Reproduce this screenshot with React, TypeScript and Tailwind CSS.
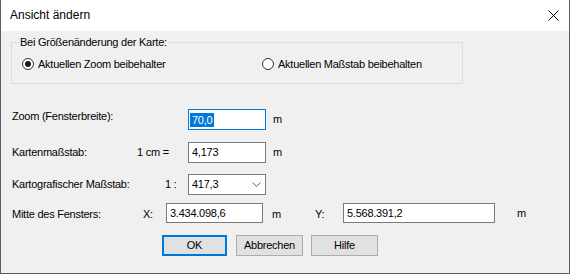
const Radio = ({ checked }: { checked?: boolean }) => (
  <span className="w-[12px] h-[12px] rounded-full border border-[#333] bg-white flex items-center justify-center shrink-0">
    {checked && <span className="w-[6px] h-[6px] rounded-full bg-[#1a1a1a]" />}
  </span>
);

const Field = ({ w, h = "h-[21px]", children }: { w: string; h?: string; children: React.ReactNode }) => (
  <div className={`${w} ${h} shrink-0 border border-[#7a7a7a] bg-white flex items-center pl-[3px]`}>{children}</div>
);

const App = () => {
  return (
    <div className="w-[570px] h-[274px] bg-[#f0f0f0] border-x border-b border-[#56616c] flex flex-col text-[11px] leading-[13px] tracking-[-0.25px] text-black font-['Liberation_Sans',Arial,sans-serif]">
      <header className="h-[31px] shrink-0 bg-white flex items-center justify-between pl-[9px] pr-[10px] text-[12px] tracking-normal">
        <span>Ansicht ändern</span>
        <svg width="11" height="11" viewBox="0 0 11 11">
          <path d="M0.5 0.5 L10.5 10.5 M10.5 0.5 L0.5 10.5" stroke="#000" strokeWidth="1" />
        </svg>
      </header>

      <div className="mt-[11px] ml-[10px] w-[452px] h-[42px] border border-[#dcdcdc] shrink-0">
        <span className="block w-fit -mt-[7px] ml-[7px] px-[1px] bg-[#f0f0f0]">Bei Größenänderung der Karte:</span>
        <div className="flex items-center mt-[8px] pl-[10px] h-[14px]">
          <div className="flex items-center gap-[4px] w-[240px]">
            <Radio checked />
            <span>Aktuellen Zoom beibehalter</span>
          </div>
          <div className="flex items-center gap-[4px]">
            <Radio />
            <span>Aktuellen Maßstab beibehalten</span>
          </div>
        </div>
      </div>

      <div className="flex items-center h-[21px] mt-[25px] pl-[11px]">
        <span className="w-[176px] self-start pt-[1px]">Zoom (Fensterbreite):</span>
        <div className="w-[78px] h-[21px] shrink-0 border border-[#0078d7] bg-white flex items-center">
          <span className="ml-[1px] px-[2px] h-[14px] leading-[14px] bg-[#0078d7] text-white">70,0</span>
        </div>
        <span className="ml-[7px]">m</span>
      </div>

      <div className="flex items-center h-[21px] mt-[12px] pl-[11px]">
        <span className="w-[125px]">Kartenmaßstab:</span>
        <span className="w-[51px]">1 cm =</span>
        <Field w="w-[78px]">4,173</Field>
        <span className="ml-[7px]">m</span>
      </div>

      <div className="flex items-center h-[21px] mt-[11px] pl-[11px]">
        <span className="w-[153px]">Kartografischer Maßstab:</span>
        <span className="w-[23px]">1 :</span>
        <div className="w-[78px] h-[21px] shrink-0 border border-[#7a7a7a] bg-white flex items-center justify-between pl-[3px] pr-[4px]">
          <span>417,3</span>
          <svg width="9" height="5" viewBox="0 0 9 5">
            <path d="M0.5 0.5 L4.5 4.5 L8.5 0.5" stroke="#606060" fill="none" strokeWidth="1" />
          </svg>
        </div>
      </div>

      <div className="flex items-center h-[20px] mt-[8px] pl-[11px]">
        <span className="w-[131px] pt-[3px]">Mitte des Fensters:</span>
        <span className="w-[23px] pt-[3px]">X:</span>
        <Field w="w-[97px]" h="h-[20px]">3.434.098,6</Field>
        <span className="ml-[9px] w-[43px] pt-[3px]">m</span>
        <span className="w-[28px] pt-[3px]">Y:</span>
        <Field w="w-[152px]" h="h-[20px]">5.568.391,2</Field>
        <span className="ml-[22px]">m</span>
      </div>

      <div className="flex h-[21px] mt-[12px] pl-[161px]">
        <button className="w-[65px] h-[21px] border-2 border-[#0078d7] bg-[#e1e1e1]">OK</button>
        <button className="ml-[9px] w-[67px] h-[21px] border border-[#adadad] bg-[#e1e1e1]">Abbrechen</button>
        <button className="ml-[8px] w-[67px] h-[21px] border border-[#adadad] bg-[#e1e1e1]">Hilfe</button>
      </div>
    </div>
  );
};

export default App;
